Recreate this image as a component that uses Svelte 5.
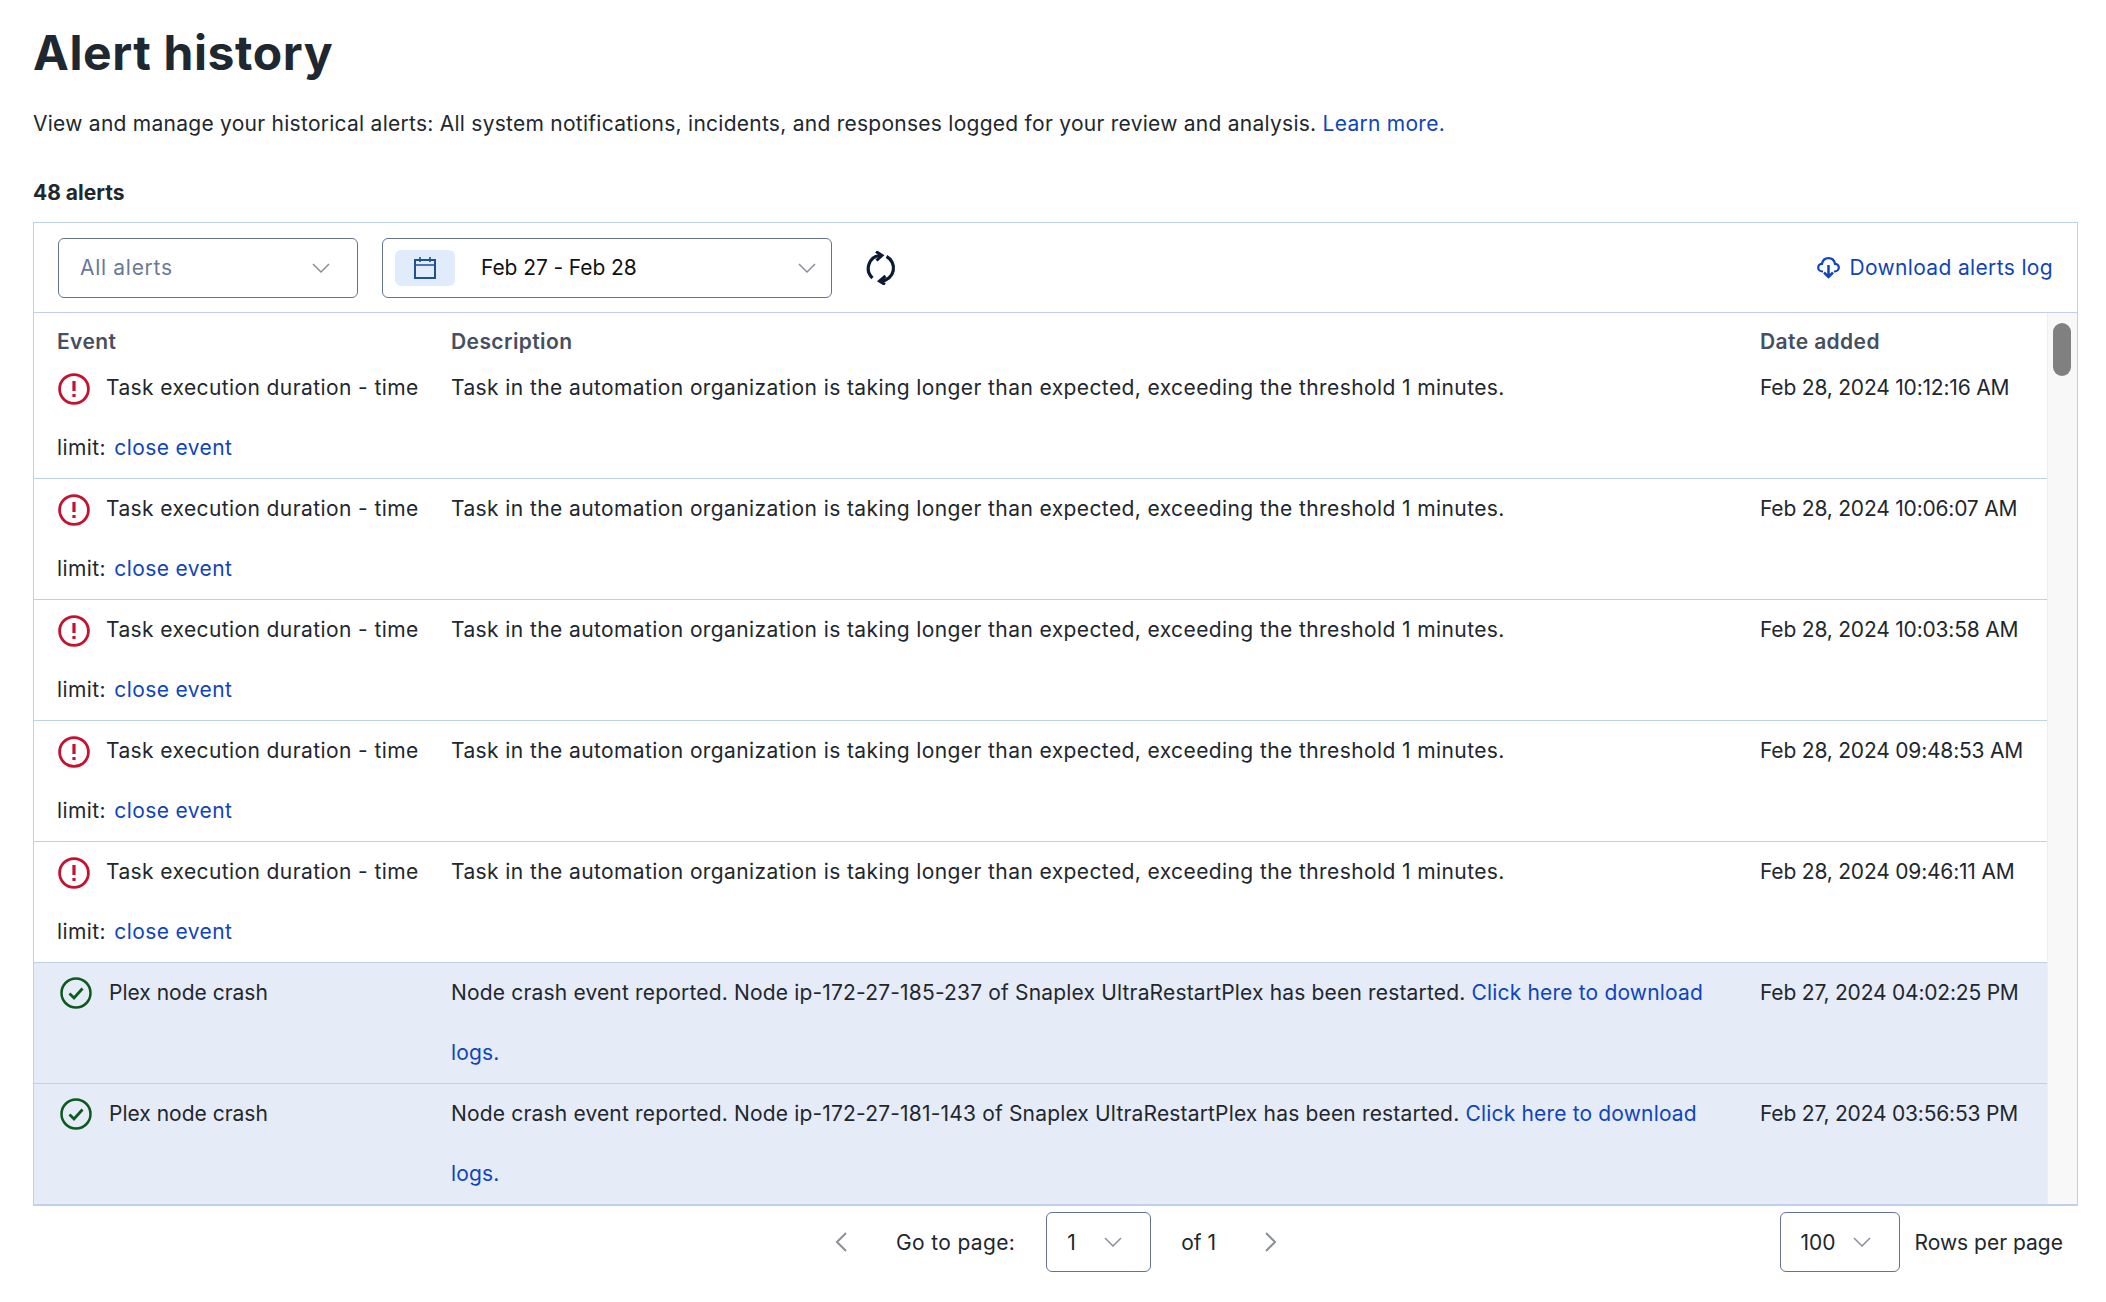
<script>
  const rows = [
    { time: "Feb 28, 2024 10:12:16 AM" },
    { time: "Feb 28, 2024 10:06:07 AM" },
    { time: "Feb 28, 2024 10:03:58 AM" },
    { time: "Feb 28, 2024 09:48:53 AM" },
    { time: "Feb 28, 2024 09:46:11 AM" },
    { time: "Feb 27, 2024 04:02:25 PM", node: "ip-172-27-185-237" },
    { time: "Feb 27, 2024 03:56:53 PM", node: "ip-172-27-181-143" }
  ];
</script>

{#snippet chevron(cls = "chev")}
  <svg class={cls} viewBox="0 0 18 10" fill="none" stroke="#8b8f96" stroke-width="1.5"><path d="M1 1l8 8 8-8" /></svg>
{/snippet}

<div class="page">
  <h1>Alert history</h1>
  <p class="intro">View and manage your historical alerts: All system notifications, incidents, and responses logged for your review and analysis. <a href="#top">Learn more.</a></p>
  <div class="count">48 alerts</div>

  <div class="card">
    <div class="toolbar">
      <div class="select alerts">
        <span class="placeholder">All alerts</span>
        {@render chevron()}
      </div>
      <div class="select dates">
        <span class="chip">
          <svg width="24" height="22" viewBox="0 0 24 22" fill="none" stroke="#1f5093" stroke-width="2">
            <rect x="2" y="3" width="20" height="18" />
            <path d="M2 8h20M7 0v5M17 0v5" stroke-width="1.6" />
          </svg>
        </span>
        <span class="range">Feb 27 - Feb 28</span>
        {@render chevron()}
      </div>
      <svg class="refresh" width="30" height="34" viewBox="0 0 30 34" fill="none" stroke="#0c1a33" stroke-width="3.200">
        <path d="M14 4.500A13 13 0 0 0 6.500 27" />
        <path d="M20.500 5.500A13 13 0 0 1 15.500 30" />
        <path d="M10 .5L16 4.500l-5.500 5" stroke-width="3" />
        <path d="M19.500 25L13.500 30l5.500 3.500" stroke-width="3" />
      </svg>
      <a class="download" href="#top">
        <svg width="23" height="22" viewBox="0 0 23 22" fill="none" stroke="#0f44bd" stroke-width="2.200">
          <path d="M6 14.500H5.500C3 14.500 1.200 12.700 1.200 10.500S3 6.800 5 6.800C5.700 3.400 8.300 1.200 11.500 1.200S17.300 3.400 18 6.800c2 0 3.800 1.500 3.800 3.700s-1.800 4-4.300 4H17" />
          <path d="M11.500 8v12M7 15.500l4.500 4.500 4.500-4.500" stroke-width="2.500" />
        </svg>
        Download alerts log
      </a>
    </div>

    <div class="body">
      <div class="table">
        <div class="row head">
          <div>Event</div>
          <div>Description</div>
          <div>Date added</div>
        </div>
        {#each rows as row}
          <div class="row" class:ok={row.node}>
            {#if row.node}
              <div class="event plex">
                <svg class="icon green" width="32" height="32" viewBox="0 0 32 32" fill="none" stroke="#0b5a1e" stroke-width="2.500">
                  <circle cx="16" cy="16" r="14.500" />
                  <path d="M9.500 16.500l4.500 4.500 8.500-9.500" stroke-width="2.800" />
                </svg>Plex node crash
              </div>
              <div class="crash">Node crash event reported. Node {row.node} of Snaplex UltraRestartPlex has been restarted. <a href="#top">Click here to download logs.</a></div>
            {:else}
              <div class="event">
                <svg class="icon" width="32" height="32" viewBox="0 0 32 32" fill="none" stroke="#c4122f" stroke-width="2.800">
                  <circle cx="16" cy="16" r="14.400" />
                  <path d="M16 8v10M16 21v3" stroke-width="3.200" />
                </svg>Task execution duration - time limit: <a class="close" href="#top">close event</a>
              </div>
              <div>Task in the automation organization is taking longer than expected, exceeding the threshold 1 minutes.</div>
            {/if}
            <div class="when">{row.time}</div>
          </div>
        {/each}
      </div>
      <div class="track"><div class="thumb"></div></div>
    </div>
  </div>

  <div class="pager">
    <div class="pages">
      <svg class="arrow" width="12" height="20" viewBox="0 0 12 20" fill="none" stroke="#8b8f96" stroke-width="2"><path d="M11 1L2 10l9 9" /></svg>
      <span class="goto">Go to page:</span>
      <div class="select small page-no">
        <span>1</span>
        {@render chevron()}
      </div>
      <span class="of">of 1</span>
      <svg class="arrow" width="12" height="20" viewBox="0 0 12 20" fill="none" stroke="#8b8f96" stroke-width="2"><path d="M1 1l9 9-9 9" /></svg>
    </div>
    <div class="per-page">
      <div class="select small rows-no">
        <span>100</span>
        {@render chevron()}
      </div>
      <span>Rows per page</span>
    </div>
  </div>
</div>

<style>
  :global(body) {
    margin: 0;
    background: #fff;
  }

  .page {
    height: 1302px;
    box-sizing: border-box;
    padding: 0 28px 0 33px;
    font-family: Inter, "Liberation Sans", sans-serif;
    font-size: 21px;
    letter-spacing: 0.4px;
    color: #22272e;
    overflow: hidden;
  }

  a {
    color: #0f44bd;
    text-decoration: none;
  }

  h1 {
    margin: 0;
    padding-top: 24px;
    font-size: 48px;
    line-height: 58px;
    font-weight: 700;
    letter-spacing: 0.6px;
    color: #1f2730;
  }

  .intro {
    margin: 27px 0 0;
    line-height: 30px;
    letter-spacing: 0.26px;
  }

  .count {
    margin-top: 39px;
    line-height: 30px;
    font-weight: 700;
    letter-spacing: 0;
  }

  .card {
    margin-top: 14px;
    border: 1px solid #c0d0ea;
    border-bottom-width: 2px;
  }

  .toolbar {
    display: flex;
    align-items: center;
    height: 89px;
    padding: 0 24px;
    border-bottom: 1px solid #c0d0ea;
  }

  .select {
    display: flex;
    align-items: center;
    justify-content: space-between;
    box-sizing: border-box;
    height: 60px;
    border: 1.5px solid #667390;
    border-radius: 6px;
  }

  .chev {
    width: 18px;
    height: 10px;
  }

  .alerts {
    width: 300px;
    padding: 0 27px 0 21px;
    margin-right: 24px;
    letter-spacing: 0.7px;
  }

  .placeholder {
    color: #6a7a96;
  }

  .dates {
    width: 450px;
    padding: 0 15px 0 12px;
    margin-right: 34px;
    letter-spacing: -0.1px;
  }

  .chip {
    display: flex;
    align-items: center;
    justify-content: center;
    width: 60px;
    height: 36px;
    border-radius: 6px;
    background: #e0ebfb;
  }

  .range {
    flex: 1;
    margin-left: 26px;
    color: #111;
  }

  .download {
    display: flex;
    align-items: center;
    gap: 9px;
    margin-left: auto;
    letter-spacing: 0.35px;
  }

  .body {
    display: flex;
    height: 891px;
  }

  .table {
    flex: 1;
    min-width: 0;
  }

  .row {
    display: grid;
    grid-template-columns: 417px 1309px 1fr;
    line-height: 60px;
    border-bottom: 1px solid #c0d0ea;
  }

  .row > div {
    padding-right: 20px;
  }

  .row > div:first-child {
    padding-left: 23px;
  }

  .row > .when {
    padding-right: 0;
    letter-spacing: -0.2px;
  }

  .row:last-child {
    border-bottom: 0;
  }

  .row.ok {
    background: #e5ebf7;
  }

  .head {
    height: 45px;
    line-height: 58px;
    border-bottom: 0;
    font-weight: 600;
    color: #454f5f;
  }

  .head > div:last-child {
    letter-spacing: 0.4px;
  }

  .plex {
    letter-spacing: 0;
  }

  .crash {
    letter-spacing: 0.17px;
  }

  .close {
    margin-left: 2px;
  }

  .icon {
    vertical-align: middle;
    margin: 0 16px 0 1px;
  }

  .icon.green {
    margin: 0 17px 2px 3px;
  }

  .track {
    position: relative;
    box-sizing: border-box;
    width: 30px;
    background: #f8f8f8;
    border-left: 1px solid #eeeeee;
  }

  .thumb {
    position: absolute;
    top: 10px;
    left: 5px;
    width: 18px;
    height: 53px;
    border-radius: 9px;
    background: #808080;
  }

  .pager {
    display: flex;
    justify-content: space-between;
    align-items: center;
    height: 60px;
    margin-top: 6px;
    padding-right: 15px;
    letter-spacing: 0;
  }

  .pages {
    display: flex;
    align-items: center;
    margin-left: 802px;
  }

  .goto {
    margin: 0 31px 0 49px;
    letter-spacing: 0.35px;
  }

  .small {
    height: 60px;
  }

  .page-no {
    width: 105px;
    padding: 0 28px 0 20px;
  }

  .of {
    margin: 0 49px 0 30px;
  }

  .per-page {
    display: flex;
    align-items: center;
    gap: 15px;
  }

  .rows-no {
    width: 120px;
    padding: 0 28px 0 20px;
  }
</style>
